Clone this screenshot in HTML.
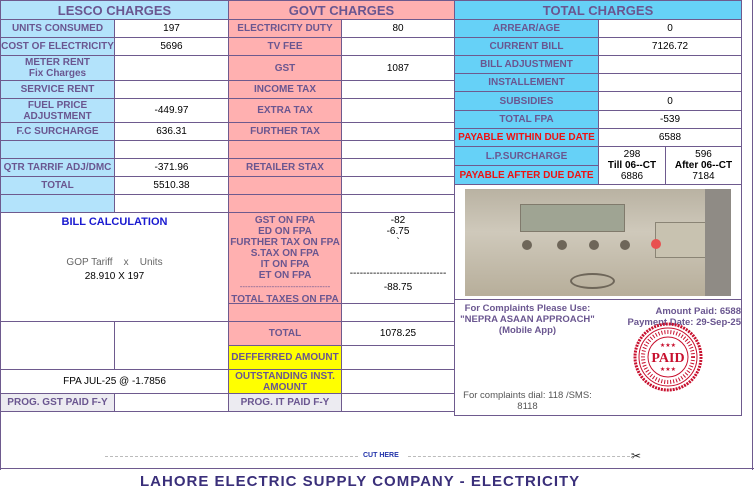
<!DOCTYPE html>
<html><head><meta charset="utf-8"><style>
*{margin:0;padding:0;box-sizing:border-box}
body{width:754px;height:478px;overflow:hidden;background:#fff;font-family:"Liberation Sans",Arial,sans-serif;position:relative}
.c{position:absolute;border:1px solid #6e5a8e;display:flex;align-items:center;justify-content:center;text-align:center;font-size:10px;line-height:11px;color:#000}
.l{color:#6a5690;font-weight:bold}
.b{background:#b3e3fb}
.p{background:#ffb0b0}
.t{background:#66d1f7}
.y{background:#ffff00;color:#6a5690;font-weight:bold}
.g{background:#ecebf1}
.h{font-size:13px;font-weight:bold;color:#6a5690}
.r{color:#ee1111;font-weight:bold}
.a{position:absolute}
</style></head><body>
<div class="a" style="left:0;top:0;width:1px;height:470px;background:#6e5a8e"></div>
<div class="a" style="left:752px;top:0;width:1px;height:470px;background:#6e5a8e"></div>
<div class="a" style="left:0;top:468px;width:754px;height:1px;background:#6e5a8e"></div>

<!-- LESCO -->
<div class="c b h" style="left:0;top:0;width:229px;height:20px">LESCO CHARGES</div>
<div class="c b l" style="left:0;top:19px;width:115px;height:19px">UNITS CONSUMED</div><div class="c" style="left:114px;top:19px;width:115px;height:19px">197</div>
<div class="c b l" style="left:0;top:37px;width:115px;height:19px">COST OF ELECTRICITY</div><div class="c" style="left:114px;top:37px;width:115px;height:19px">5696</div>
<div class="c b l" style="left:0;top:55px;width:115px;height:26px">METER RENT<br>Fix Charges</div><div class="c" style="left:114px;top:55px;width:115px;height:26px"></div>
<div class="c b l" style="left:0;top:80px;width:115px;height:19px">SERVICE RENT</div><div class="c" style="left:114px;top:80px;width:115px;height:19px"></div>
<div class="c b l" style="left:0;top:98px;width:115px;height:25px">FUEL PRICE<br>ADJUSTMENT</div><div class="c" style="left:114px;top:98px;width:115px;height:25px">-449.97</div>
<div class="c b l" style="left:0;top:122px;width:115px;height:19px">F.C SURCHARGE</div><div class="c" style="left:114px;top:122px;width:115px;height:19px">636.31</div>
<div class="c b l" style="left:0;top:140px;width:115px;height:19px"></div><div class="c" style="left:114px;top:140px;width:115px;height:19px"></div>
<div class="c b l" style="left:0;top:158px;width:115px;height:19px">QTR TARRIF ADJ/DMC</div><div class="c" style="left:114px;top:158px;width:115px;height:19px">-371.96</div>
<div class="c b l" style="left:0;top:176px;width:115px;height:19px">TOTAL</div><div class="c" style="left:114px;top:176px;width:115px;height:19px">5510.38</div>
<div class="c b l" style="left:0;top:194px;width:115px;height:19px"></div><div class="c" style="left:114px;top:194px;width:115px;height:19px"></div>
<div class="c" style="left:0;top:212px;width:229px;height:110px;display:block">
 <div style="color:#1a1ad0;font-weight:bold;font-size:11px;margin-top:4px">BILL CALCULATION</div>
 <div style="color:#666;margin-top:29px">GOP Tariff &nbsp;&nbsp; x &nbsp;&nbsp; Units</div>
 <div style="margin-top:3px">28.910 X 197</div>
</div>
<div class="c" style="left:0;top:321px;width:115px;height:49px"></div><div class="c" style="left:114px;top:321px;width:115px;height:49px"></div>
<div class="c" style="left:0;top:369px;width:229px;height:25px">FPA JUL-25 @ -1.7856</div>
<div class="c g l" style="left:0;top:393px;width:115px;height:19px">PROG. GST PAID F-Y</div><div class="c" style="left:114px;top:393px;width:115px;height:19px"></div>

<!-- GOVT -->
<div class="c p h" style="left:228px;top:0;width:227px;height:20px">GOVT CHARGES</div>
<div class="c p l" style="left:228px;top:19px;width:114px;height:19px">ELECTRICITY DUTY</div><div class="c" style="left:341px;top:19px;width:114px;height:19px">80</div>
<div class="c p l" style="left:228px;top:37px;width:114px;height:19px">TV FEE</div><div class="c" style="left:341px;top:37px;width:114px;height:19px"></div>
<div class="c p l" style="left:228px;top:55px;width:114px;height:26px">GST</div><div class="c" style="left:341px;top:55px;width:114px;height:26px">1087</div>
<div class="c p l" style="left:228px;top:80px;width:114px;height:19px">INCOME TAX</div><div class="c" style="left:341px;top:80px;width:114px;height:19px"></div>
<div class="c p l" style="left:228px;top:98px;width:114px;height:25px">EXTRA TAX</div><div class="c" style="left:341px;top:98px;width:114px;height:25px"></div>
<div class="c p l" style="left:228px;top:122px;width:114px;height:19px">FURTHER TAX</div><div class="c" style="left:341px;top:122px;width:114px;height:19px"></div>
<div class="c p l" style="left:228px;top:140px;width:114px;height:19px"></div><div class="c" style="left:341px;top:140px;width:114px;height:19px"></div>
<div class="c p l" style="left:228px;top:158px;width:114px;height:19px">RETAILER STAX</div><div class="c" style="left:341px;top:158px;width:114px;height:19px"></div>
<div class="c p l" style="left:228px;top:176px;width:114px;height:19px"></div><div class="c" style="left:341px;top:176px;width:114px;height:19px"></div>
<div class="c p l" style="left:228px;top:194px;width:114px;height:19px"></div><div class="c" style="left:341px;top:194px;width:114px;height:19px"></div>
<div class="c p l" style="left:228px;top:212px;width:114px;height:92px;display:block;padding-top:2px">GST ON FPA<br>ED ON FPA<br>FURTHER TAX ON FPA<br>S.TAX ON FPA<br>IT ON FPA<br>ET ON FPA<br><span style="font-weight:normal;font-size:8px">----------------------------------</span><br><span style="line-height:16px">TOTAL TAXES ON FPA</span></div>
<div class="c" style="left:341px;top:212px;width:114px;height:92px;display:block;padding-top:2px">-82<br>-6.75<br>`<br><br><br><div style="margin-top:-2px">-----------------------------</div><div style="margin-top:3px">-88.75</div></div>
<div class="c p" style="left:228px;top:303px;width:114px;height:19px"></div><div class="c" style="left:341px;top:303px;width:114px;height:19px"></div>
<div class="c p l" style="left:228px;top:321px;width:114px;height:25px">TOTAL</div><div class="c" style="left:341px;top:321px;width:114px;height:25px">1078.25</div>
<div class="c y" style="left:228px;top:345px;width:114px;height:25px">DEFFERRED AMOUNT</div><div class="c" style="left:341px;top:345px;width:114px;height:25px"></div>
<div class="c y" style="left:228px;top:369px;width:114px;height:25px">OUTSTANDING INST.<br>AMOUNT</div><div class="c" style="left:341px;top:369px;width:114px;height:25px"></div>
<div class="c g l" style="left:228px;top:393px;width:114px;height:19px">PROG. IT PAID F-Y</div><div class="c" style="left:341px;top:393px;width:114px;height:19px"></div>

<!-- TOTAL -->
<div class="c t h" style="left:454px;top:0;width:288px;height:20px">TOTAL CHARGES</div>
<div class="c t l" style="left:454px;top:19px;width:145px;height:19px">ARREAR/AGE</div><div class="c" style="left:598px;top:19px;width:144px;height:19px">0</div>
<div class="c t l" style="left:454px;top:37px;width:145px;height:19px">CURRENT BILL</div><div class="c" style="left:598px;top:37px;width:144px;height:19px">7126.72</div>
<div class="c t l" style="left:454px;top:55px;width:145px;height:19px">BILL ADJUSTMENT</div><div class="c" style="left:598px;top:55px;width:144px;height:19px"></div>
<div class="c t l" style="left:454px;top:73px;width:145px;height:19px">INSTALLEMENT</div><div class="c" style="left:598px;top:73px;width:144px;height:19px"></div>
<div class="c t l" style="left:454px;top:91px;width:145px;height:20px">SUBSIDIES</div><div class="c" style="left:598px;top:91px;width:144px;height:20px">0</div>
<div class="c t l" style="left:454px;top:110px;width:145px;height:19px">TOTAL FPA</div><div class="c" style="left:598px;top:110px;width:144px;height:19px">-539</div>
<div class="c t r" style="left:454px;top:128px;width:145px;height:19px">PAYABLE WITHIN DUE DATE</div><div class="c" style="left:598px;top:128px;width:144px;height:19px">6588</div>
<div class="c t l" style="left:454px;top:146px;width:145px;height:20px">L.P.SURCHARGE</div>
<div class="c t r" style="left:454px;top:165px;width:145px;height:20px">PAYABLE AFTER DUE DATE</div>
<div class="c" style="left:598px;top:146px;width:68px;height:39px;display:block;padding-top:2px">298<br><b>Till 06--CT</b><br>6886</div>
<div class="c" style="left:665px;top:146px;width:77px;height:39px;display:block;padding-top:2px">596<br><b>After 06--CT</b><br>7184</div>
<!-- photo -->
<div class="a" style="left:465px;top:189px;width:266px;height:107px;background:linear-gradient(180deg,#b9b2a2 0%,#cfc9bb 40%,#b7ae9a 100%);overflow:hidden">
 <div class="a" style="left:55px;top:15px;width:105px;height:28px;background:#9fa493;border:1px solid #807a6c"></div>
 <div class="a" style="left:190px;top:33px;width:54px;height:36px;background:#c8c2b0;border:1px solid #8a8475"></div>
 <div class="a" style="left:57px;top:51px;width:10px;height:10px;border-radius:50%;background:#6e6659"></div>
 <div class="a" style="left:92px;top:51px;width:10px;height:10px;border-radius:50%;background:#6e6659"></div>
 <div class="a" style="left:124px;top:51px;width:10px;height:10px;border-radius:50%;background:#6e6659"></div>
 <div class="a" style="left:155px;top:51px;width:10px;height:10px;border-radius:50%;background:#6e6659"></div>
 <div class="a" style="left:186px;top:50px;width:10px;height:10px;border-radius:50%;background:#e85050"></div>
 <div class="a" style="left:105px;top:84px;width:45px;height:16px;border-radius:50%;border:2px solid #6e6659"></div>
 <div class="a" style="left:240px;top:0;width:26px;height:107px;background:#8f8b85"></div>
</div>
<div class="a" style="left:454px;top:184px;width:1px;height:232px;background:#6e5a8e"></div>
<div class="a" style="left:454px;top:299px;width:288px;height:1px;background:#6e5a8e"></div>
<div class="a" style="left:454px;top:415px;width:288px;height:1px;background:#6e5a8e"></div>
<div class="a" style="left:741px;top:0;width:1px;height:416px;background:#6e5a8e"></div>
<div class="a l" style="left:455px;top:303px;width:145px;text-align:center;font-size:9.5px;line-height:11px">For Complaints Please Use:<br>"NEPRA ASAAN APPROACH"<br>(Mobile App)</div>
<div class="a" style="left:455px;top:390px;width:145px;text-align:center;font-size:9.5px;line-height:11px;color:#555">For complaints dial: 118 /SMS:<br>8118</div>
<div class="a l" style="left:600px;top:306px;width:141px;text-align:right;font-size:9.5px;line-height:11px">Amount Paid: 6588<br>Payment Date: 29-Sep-25</div>
<svg class="a" style="left:632px;top:321px" width="72" height="72" viewBox="0 0 72 72">
 <circle cx="36" cy="36" r="33" fill="none" stroke="#c8102e" stroke-width="3" stroke-dasharray="2 1"/>
 <circle cx="36" cy="36" r="29" fill="none" stroke="#c8102e" stroke-width="1"/>
 <circle cx="36" cy="36" r="20" fill="none" stroke="#c8102e" stroke-width="1"/>
 <circle cx="36" cy="36" r="25" fill="none" stroke="#c8102e" stroke-width="4" stroke-dasharray="1 2"/>
 <text x="36" y="41" text-anchor="middle" font-family="Liberation Serif" font-weight="bold" font-size="14" fill="#c8102e">PAID</text>
 <text x="36" y="26" text-anchor="middle" font-size="6" fill="#c8102e">★★★</text>
 <text x="36" y="50" text-anchor="middle" font-size="6" fill="#c8102e">★★★</text>
</svg>

<div class="a" style="left:105px;top:456px;width:253px;border-top:1px dashed #bbb"></div>
<div class="a" style="left:363px;top:452px;font-size:7px;color:#2233aa;font-weight:bold">CUT HERE</div>
<div class="a" style="left:408px;top:456px;width:222px;border-top:1px dashed #bbb"></div>
<div class="a" style="left:631px;top:449px;font-size:12px;color:#222">✂</div>
<div class="a" style="left:140px;top:473px;font-size:15px;font-weight:bold;color:#3a2f7a;letter-spacing:1px;white-space:nowrap">LAHORE ELECTRIC SUPPLY COMPANY - ELECTRICITY</div>
</body></html>
